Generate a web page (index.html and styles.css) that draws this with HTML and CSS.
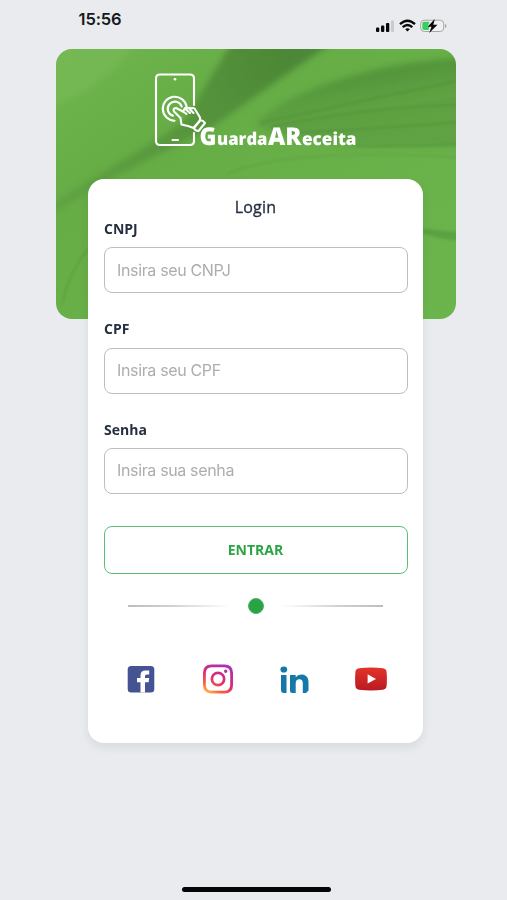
FILE: index.html
```html
<!DOCTYPE html>
<html lang="pt-BR">
<head>
<meta charset="utf-8">
<meta name="viewport" content="width=device-width, initial-scale=1">
<title>GuardaAReceita</title>
<link rel="stylesheet" href="styles.css">
</head>
<body>
<div class="screen">
  <header class="status">
    <span class="clock">15:56</span>
    <svg class="indicators" viewBox="0 0 72 16" width="72" height="16" aria-hidden="true">
      <rect x="1" y="9.500" width="3.300" height="4.500" rx="1" fill="#080808"/>
      <rect x="6" y="7.500" width="3.300" height="6.500" rx="1" fill="#080808"/>
      <rect x="11" y="5" width="3.300" height="9" rx="1" fill="#080808"/>
      <rect x="16" y="2.500" width="3" height="11.500" rx="1" fill="#c9cbce"/>
      <g fill="none" stroke="#080808" stroke-width="2.300">
        <path d="M25 6.200 Q32.500 -0.800 40 6.200"/>
        <path d="M27.700 9.200 Q32.500 4.800 37.300 9.200"/>
      </g>
      <path d="M30.200 11.200 Q32.500 9.200 34.800 11.200 L32.500 13.600 Z" fill="#080808"/>
      <rect x="45.700" y="2.200" width="23" height="11.300" rx="3.500" fill="#eff0f1" stroke="#a5a7aa"/>
      <path d="M49 3.800 h5.500 l-2 5 h2 l-1 3.200 H49 q-1.700 0 -1.700 -1.700 V5.500 q0 -1.700 1.700 -1.700z" fill="#35cf5d"/>
      <path d="M59.800 1 L52.500 8.800 h4 L54.200 15 L62.500 6.800 h-4.200 Z" fill="#080808"/>
      <path d="M70 6 q1.500 .5 1.500 2 t-1.500 2z" fill="#a5a7aa"/>
    </svg>
  </header>

  <section class="hero">
    <svg class="waves" viewBox="0 0 400 270" preserveAspectRatio="none" aria-hidden="true">
      <defs>
        <linearGradient id="base" x1="0" y1="0" x2="1" y2="1">
          <stop offset="0" stop-color="#70b54e"/>
          <stop offset=".3" stop-color="#66ad46"/>
          <stop offset="1" stop-color="#6cb54d"/>
        </linearGradient>
        <linearGradient id="stem" x1="0" y1="160" x2="230" y2="0" gradientUnits="userSpaceOnUse">
          <stop offset="0" stop-color="#4b8435" stop-opacity=".25"/>
          <stop offset=".5" stop-color="#4b8435" stop-opacity=".55"/>
          <stop offset="1" stop-color="#467e32" stop-opacity=".8"/>
        </linearGradient>
        <linearGradient id="wing" x1="300" y1="22" x2="312" y2="98" gradientUnits="userSpaceOnUse">
          <stop offset="0" stop-color="#427e2f" stop-opacity=".6"/>
          <stop offset=".4" stop-color="#4a8535" stop-opacity=".35"/>
          <stop offset="1" stop-color="#4a8535" stop-opacity=".32"/>
        </linearGradient>
        <filter id="soft" x="-20%" y="-20%" width="140%" height="140%"><feGaussianBlur stdDeviation="3"/></filter>
        <filter id="fine" x="-20%" y="-20%" width="140%" height="140%"><feGaussianBlur stdDeviation="1.200"/></filter>
      </defs>
      <rect width="400" height="270" fill="url(#base)"/>
      <g filter="url(#soft)">
        <path d="M-9 -9 H82 Q50 38 -9 60Z" fill="#7abd59" opacity=".5"/>
        <path d="M-8 158 C50 118 105 92 130 70 Q148 38 177 -8 H280 C240 18 205 44 154 80 C110 102 60 125 -8 168Z" fill="url(#stem)"/>
        <path d="M200 73 C235 40 325 12 408 9 V98 L315 98 Q260 96 200 77Z" fill="url(#wing)"/>
      </g>
      <g filter="url(#fine)" fill="none" stroke="#427a30" stroke-width="1.300" opacity=".3">
        <path d="M205 74 Q315 50 400 32"/>
        <path d="M215 78 Q310 58 400 56"/>
        <path d="M230 84 Q325 80 400 73"/>
        <path d="M300 97 Q350 98 400 95"/>
        <path d="M170 125 C230 100 335 105 400 108" opacity=".6"/>
        <path d="M6 255 Q14 220 34 198 Q60 168 92 151"/>
      </g>
      <path d="M362 179 Q383 182 404 183 V192 Q382 190 362 183Z" fill="#4e963a" opacity=".55" filter="url(#fine)"/>
    </svg>
    <svg class="logo" viewBox="0 0 216 84" width="216" height="84" role="img" aria-label="GuardaAReceita">
      <g fill="none" stroke="#fff" stroke-width="2.100" stroke-linecap="round" stroke-linejoin="round">
        <path d="M40 34 V7.500 Q40 3.500 36 3.500 H6 Q2 3.500 2 7.500 V70 Q2 74 6 74 H36 Q40 74 40 70 V62"/>
        <path d="M18.500 69 H24"/>
        <path d="M20.500 49.700 A12 12 0 1 1 32.600 35.500"/>
        <path d="M19 44.800 A7.200 7.200 0 1 1 27.700 35.500"/>
        <path d="M34 55 L27.500 53.500 L26.500 47 L20 40.500 Q18.500 37.500 22 37 L29 40.500 L31 37 Q32.500 36 34 37.500 Q35.500 36 37.500 37.500 Q40 36 41.500 39 L46 46.500 V49.500 L39.500 57 L34 55Z"/>
        <path d="M29 40.500 L32.500 43 M32 38.500 L36 42 M36 38.500 L39.500 42"/>
        <path d="M40 57 L46 49.500 Q48 48.500 51 52 L44.500 60 Q41 60 40 57Z"/>
      </g>
      <circle cx="21" cy="8.200" r="1.300" fill="#fff"/>
      <g class="wordmark">
        <text class="cap" x="45.500" y="74" textLength="17" lengthAdjust="spacingAndGlyphs">G</text>
        <text x="63" y="74" textLength="50.500" lengthAdjust="spacingAndGlyphs">uarda</text>
        <text class="cap" x="114" y="74" textLength="33.500" lengthAdjust="spacingAndGlyphs">AR</text>
        <text x="148" y="74" textLength="54.500" lengthAdjust="spacingAndGlyphs">eceita</text>
      </g>
    </svg>
  </section>

  <main class="card">
    <h1>Login</h1>
    <form>
      <div class="field">
        <label for="cnpj">CNPJ</label>
        <input id="cnpj" type="text" placeholder="Insira seu CNPJ">
      </div>
      <div class="field">
        <label for="cpf">CPF</label>
        <input id="cpf" type="text" placeholder="Insira seu CPF">
      </div>
      <div class="field">
        <label for="senha">Senha</label>
        <input id="senha" type="password" placeholder="Insira sua senha">
      </div>
      <button type="button">ENTRAR</button>
    </form>
    <div class="divider"><i class="line"></i><i class="dot"></i><i class="line right"></i></div>
    <nav class="social">
      <svg viewBox="0 0 32 32" width="32" height="32" aria-hidden="true">
        <rect x="2.700" y="3" width="26.600" height="26.600" rx="3.500" fill="#465393"/>
        <path d="M15.500 29.600 V19.200 H12 V15 H15.500 V12.500 Q15.500 7.500 20.500 7.500 H24.200 V11.500 H21.700 Q20 11.500 20 13.300 V15 H24.200 L23.600 19.200 H20 V29.600Z" fill="#fff"/>
      </svg>
      <svg viewBox="0 0 32 32" width="32" height="32" aria-hidden="true">
        <defs><linearGradient id="insta" x1=".15" y1="1" x2=".75" y2="0">
          <stop offset="0" stop-color="#ffc34c"/><stop offset=".22" stop-color="#fb603f"/><stop offset=".5" stop-color="#df2b70"/><stop offset="1" stop-color="#a832b6"/>
        </linearGradient></defs>
        <path fill="url(#insta)" fill-rule="evenodd" d="M9.500 1.500 H22.500 Q31 1.500 31 10 V22 Q31 30.500 22.500 30.500 H9.500 Q1 30.500 1 22 V10 Q1 1.500 9.500 1.500Z M9.800 4.200 Q3.800 4.200 3.800 10.200 V21.800 Q3.800 27.800 9.800 27.800 H22.200 Q28.200 27.800 28.200 21.800 V10.200 Q28.200 4.200 22.200 4.200Z M16 8.500 A7.500 7.500 0 1 1 16 23.500 A7.500 7.500 0 1 1 16 8.500Z M16 11.200 A4.800 4.800 0 1 0 16 20.800 A4.800 4.800 0 1 0 16 11.200Z M23.700 6.600 A1.700 1.700 0 1 1 23.700 10 A1.700 1.700 0 1 1 23.700 6.600Z"/>
      </svg>
      <svg viewBox="0 0 32 32" width="32" height="32" aria-hidden="true">
        <g fill="#1478a8"><ellipse cx="5.800" cy="6.500" rx="3.400" ry="3.100"/>
        <path d="M3 12 H8.500 V30 H6 Q3 30 3 27Z"/>
        <path d="M12 12 H17.700 V14.300 Q19.800 11.500 23.200 11.500 Q30.500 11.500 30.500 19.500 V27.500 L28 30 H24.800 V20.500 Q24.800 16.300 21.500 16.300 Q17.700 16.300 17.700 20.500 V30 H14.500 Q12 30 12 27.500Z"/></g>
      </svg>
      <svg viewBox="0 0 32 32" width="32" height="32" aria-hidden="true">
        <defs><linearGradient id="tube" x2="0" y2="1"><stop stop-color="#e3332c"/><stop offset="1" stop-color="#b91a20"/></linearGradient></defs>
        <path d="M4 5.200 Q16 3.800 28 5.200 Q31.400 5.600 31.600 9 Q32.200 16 31.600 23 Q31.300 26.300 28 26.800 Q16 28.200 4 26.800 Q.7 26.300 .4 23 Q-.2 16 .4 9 Q.6 5.600 4 5.200Z" fill="url(#tube)"/>
        <path d="M12.600 11.300 L21 16 L12.600 20.500Z" fill="#fff"/>
      </svg>
    </nav>
  </main>
  <footer class="home"></footer>
</div>
</body>
</html>
```

FILE: styles.css
```css
* { box-sizing: border-box; }

body {
  margin: 0;
  background: #e9ebee;
  color: #252f40;
  font-family: "Open Sans", sans-serif;
}

.screen {
  width: 400px;
  height: 900px;
  margin-left: 56px;
  display: flex;
  flex-direction: column;
}

.status {
  height: 49px;
  padding: 9px 9px 0 22.5px;
  display: flex;
  flex: none;
  justify-content: space-between;
}

.clock {
  font: 600 16.5px/21px Inter, sans-serif;
  letter-spacing: -.1px;
  color: #17191d;
}

.indicators { margin-top: 9px; }

.hero {
  position: relative;
  flex: none;
  height: 270px;
  padding: 22px 0 0 98px;
  border-radius: 16px;
  overflow: hidden;
}

.waves {
  position: absolute;
  inset: 0;
  width: 100%;
  height: 100%;
}

.logo {
  position: relative;
  display: block;
  overflow: visible;
}

.wordmark {
  font: 800 17.5px "Open Sans", sans-serif;
  fill: #fff;
}

.wordmark text { text-rendering: geometricPrecision; }

.cap { font-size: 24.5px; }

.card {
  position: relative;
  flex: none;
  width: 335px;
  height: 564px;
  margin: -140px 0 0 32px;
  padding: 16px 16px 0;
  background: #fff;
  border-radius: 16px;
  box-shadow: 0 5px 9px rgb(40 50 60 / 8%);
}

h1 {
  margin: 0;
  font-size: 16px;
  font-weight: 500;
  line-height: 24px;
  letter-spacing: .2px;
  text-align: center;
  -webkit-text-stroke: .3px #252f40;
}

.field {
  height: 100.4px;
  display: flex;
  flex-direction: column;
}

label {
  height: 28.2px;
  padding-top: 1px;
  font-size: 14px;
  font-weight: 700;
  line-height: 17px;
}

input {
  width: 304px;
  height: 46px;
  padding: 0 12px 1px;
  border: 1px solid #bdbdbe;
  border-radius: 8px;
  background: #fff;
  font: 400 16px Inter, sans-serif;
  letter-spacing: -.35px;
}

input::placeholder { color: #adadae; opacity: 1; }

button {
  display: block;
  width: 304px;
  height: 48px;
  margin-top: 6px;
  padding: 0 1px 1px 0;
  border: 1px solid #5dbe73;
  border-radius: 8px;
  background: #fff;
  color: #2aa444;
  font: 700 14px "Open Sans", sans-serif;
}

.divider {
  height: 16px;
  margin: 24px 24px 0;
  display: flex;
  align-items: center;
  justify-content: space-between;
}

.line {
  width: 102px;
  height: 1.5px;
  background: linear-gradient(90deg, #b9bcc1, #d0d2d5 45%, transparent);
}

.line.right { transform: scaleX(-1); }

.dot {
  width: 16px;
  height: 16px;
  border: 1px solid #5daa70;
  border-radius: 50%;
  background: #28a443;
}

.social {
  margin: 48.4px 20px 0 21px;
  display: flex;
  justify-content: space-between;
}

.home {
  width: 149px;
  height: 5px;
  margin: auto 0 8px 125.5px;
  border-radius: 3px;
  background: #050505;
}
```
